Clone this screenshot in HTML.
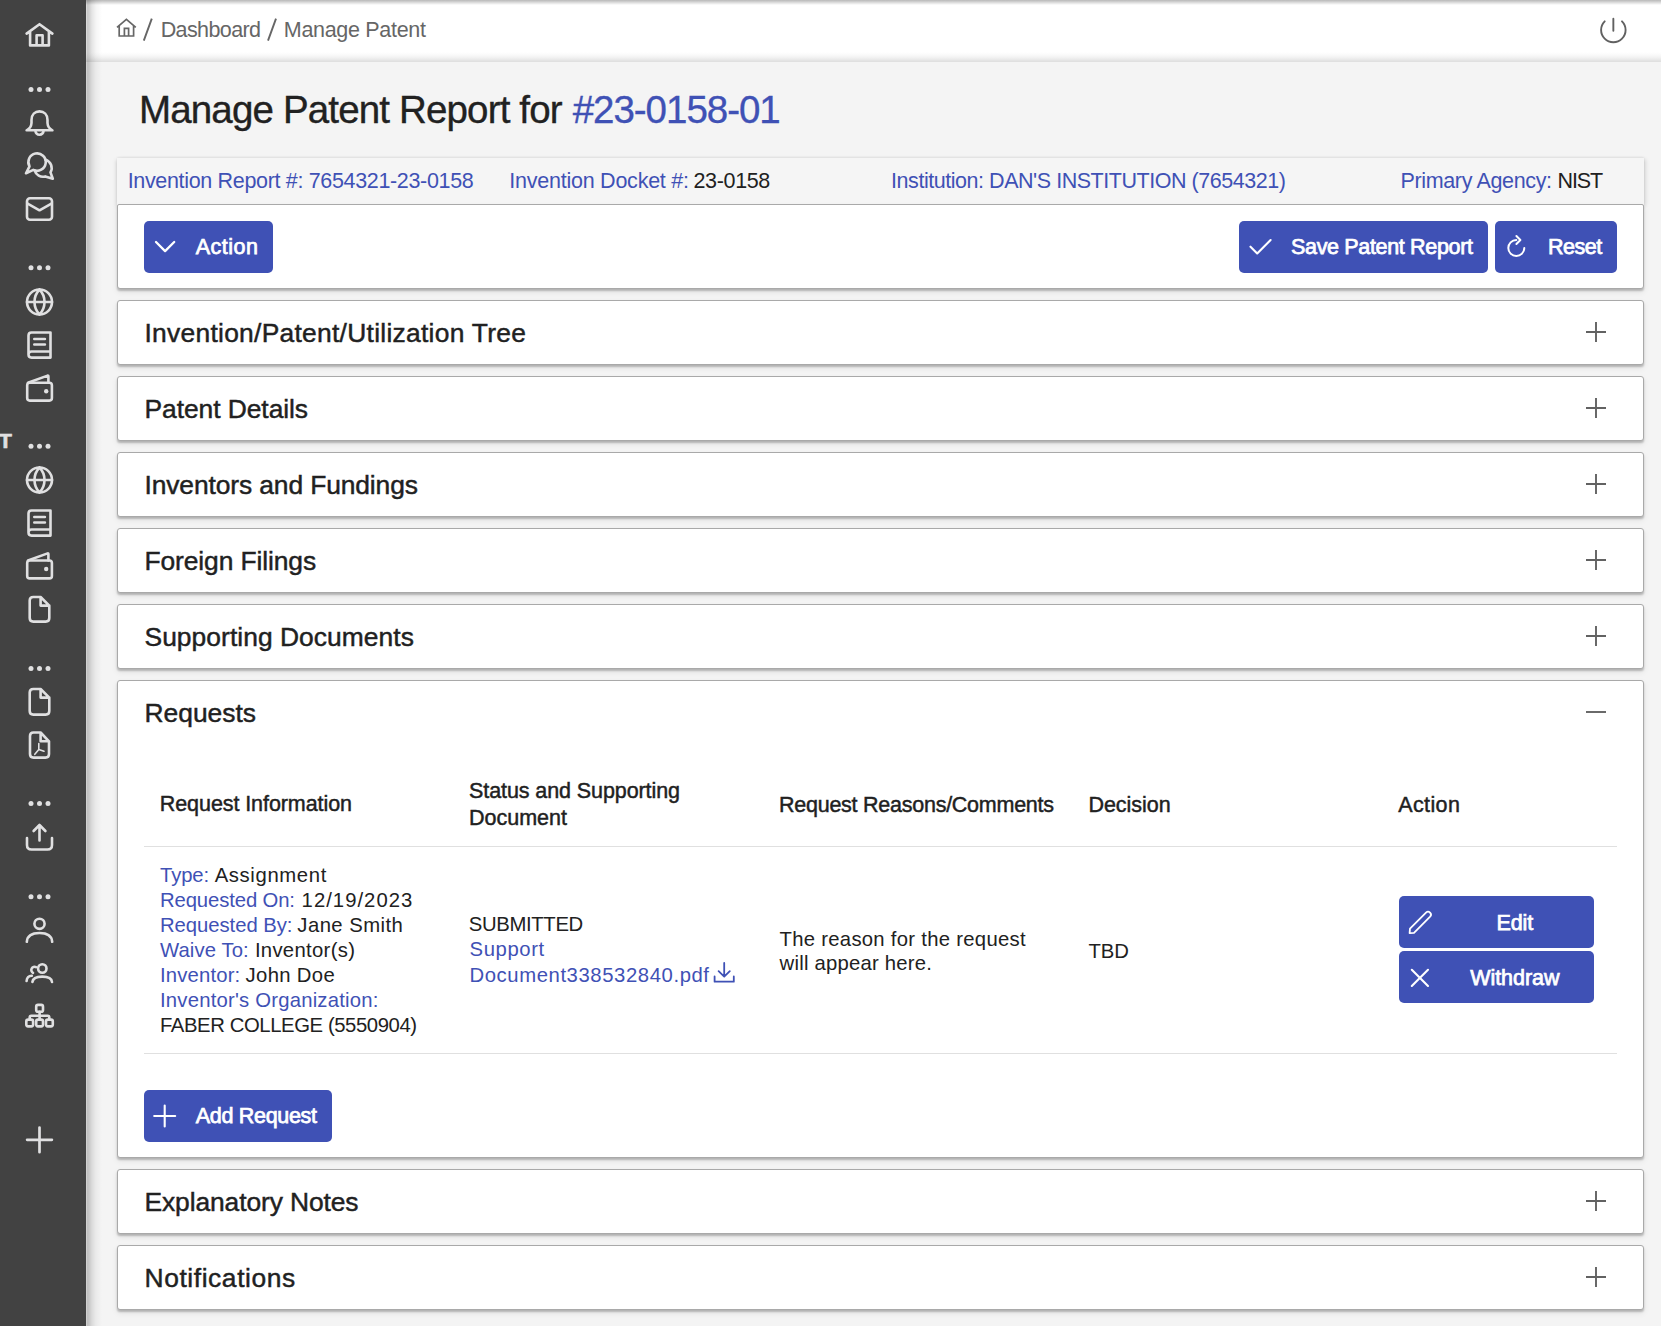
<!DOCTYPE html>
<html><head><meta charset="utf-8"><title>Manage Patent</title>
<style>
*{box-sizing:border-box;margin:0;padding:0}
html,body{width:1661px;height:1326px;overflow:hidden;background:#f4f4f4;font-family:"Liberation Sans",sans-serif;color:#212121}
.a{position:absolute}
.tx{position:absolute;white-space:nowrap;line-height:1}
#side{left:0;top:0;width:86px;height:1326px;background:#424242;z-index:5}
#sideshadow{left:86px;top:0;width:16px;height:1326px;background:linear-gradient(to right,rgba(0,0,0,.15) 0,rgba(0,0,0,.15) 1px,rgba(0,0,0,.21) 1.5px,rgba(0,0,0,.19) 3px,rgba(0,0,0,.1) 6px,rgba(0,0,0,.04) 10px,rgba(0,0,0,0) 16px);z-index:4}
#hdr{left:86px;top:0;width:1575px;height:62px;background:linear-gradient(to bottom,#fff 0,#fff 52px,#fafafa 55px,#f0f0f0 58px,#e4e4e4 60.5px,#e0e0e0 61.5px,#ececec 62px)}
#hdrtop{left:86px;top:0;width:1575px;height:5px;background:linear-gradient(to bottom,rgba(0,0,0,.28),rgba(0,0,0,0));z-index:3}
.card{position:absolute;background:#fff;border:1px solid #a9a9a9;border-radius:3px;box-shadow:0 2px 2px rgba(0,0,0,.22),0 3px 6px rgba(0,0,0,.08)}
.acc{left:117px;width:1527px;height:65px}
.btn{position:absolute;background:#3f51b5;border-radius:5px;z-index:1}
</style></head><body>
<div id="side" class="a"></div>
<div id="sideshadow" class="a"></div>
<svg class="a" style="left:0;top:0;z-index:6" width="86" height="1326" viewBox="0 0 86 1326" fill="none" stroke="#e0e0e1" stroke-width="2.6" stroke-linecap="round" stroke-linejoin="round">
<!-- home -->
<path d="M26.6 33.6L39.5 24.2L52.4 33.6M30.1 31.2V45.4H48.9V31.2M36.6 45.4V35.3H42.6V45.4"/>
<!-- dots -->
<g fill="#e0e0e1" stroke="none"><circle cx="31" cy="89.6" r="2.5"/><circle cx="39.5" cy="89.6" r="2.5"/><circle cx="48" cy="89.6" r="2.5"/>
<circle cx="31" cy="267.7" r="2.5"/><circle cx="39.5" cy="267.7" r="2.5"/><circle cx="48" cy="267.7" r="2.5"/>
<circle cx="31" cy="446.3" r="2.5"/><circle cx="39.5" cy="446.3" r="2.5"/><circle cx="48" cy="446.3" r="2.5"/>
<circle cx="31" cy="668.6" r="2.5"/><circle cx="39.5" cy="668.6" r="2.5"/><circle cx="48" cy="668.6" r="2.5"/>
<circle cx="31" cy="803.6" r="2.5"/><circle cx="39.5" cy="803.6" r="2.5"/><circle cx="48" cy="803.6" r="2.5"/>
<circle cx="31" cy="896.7" r="2.5"/><circle cx="39.5" cy="896.7" r="2.5"/><circle cx="48" cy="896.7" r="2.5"/>
<circle cx="46.2" cy="391.2" r="2.2"/><circle cx="46.2" cy="569" r="2.2"/></g>
<!-- bell -->
<path d="M26.6 130.3Q31.2 128 31.5 123V120C31.5 114.5 35 111.4 39.5 111.4C44 111.4 47.5 114.5 47.5 120V123Q47.8 128 52.4 130.3Z"/>
<path d="M35.4 130.6A4.1 4.1 0 0 0 43.6 130.6"/>
<!-- chat -->
<path d="M33.3 169.9A8.7 8.7 0 1 0 29.5 166.35L26 173.3Z"/>
<path d="M45.37 159.63A8.7 8.7 0 0 1 50.5 172.35L52.8 178.8L45.25 176.4A8.7 8.7 0 0 1 34.6 170.4"/>
<!-- mail -->
<rect x="27" y="198.2" width="25" height="21.6" rx="3"/>
<path d="M27.6 203.6L39.5 210.3L51.4 203.6"/>
<!-- globe 1 -->
<circle cx="39.5" cy="302" r="12.5"/><path d="M39.5 289.5A18.1 18.1 0 0 0 39.5 314.5A18.1 18.1 0 0 0 39.5 289.5"/><path d="M27 302H52"/>
<!-- book 1 -->
<path d="M28.5 335.5Q28.5 332.5 31.5 332.5H50.5V357.6H31.5Q28.5 357.6 28.5 354.6ZM28.5 354.6Q28.5 351.5 31.5 351.5H50.5M34.3 339H44.9M34.3 344.5H44.9"/>
<!-- wallet 1 -->
<rect x="27.2" y="382.7" width="24.7" height="17.9" rx="2.5"/>
<path d="M28 382.7L47.6 375.6Q48.4 375.4 48.4 376.4V382.7"/>
<!-- globe 2 -->
<circle cx="39.5" cy="480" r="12.5"/><path d="M39.5 467.5A18.1 18.1 0 0 0 39.5 492.5A18.1 18.1 0 0 0 39.5 467.5"/><path d="M27 480H52"/>
<!-- book 2 -->
<path d="M28.5 513.5Q28.5 510.5 31.5 510.5H50.5V535.6H31.5Q28.5 535.6 28.5 532.6ZM28.5 532.6Q28.5 529.5 31.5 529.5H50.5M34.3 517H44.9M34.3 522.5H44.9"/>
<!-- wallet 2 -->
<rect x="27.2" y="560.5" width="24.7" height="17.9" rx="2.5"/>
<path d="M28 560.5L47.6 553.4Q48.4 553.2 48.4 554.2V560.5"/>
<!-- file 1 -->
<path d="M40.6 597H33.3Q29.7 597 29.7 600.6V618Q29.7 621.6 33.3 621.6H45.7Q49.3 621.6 49.3 618V605.6ZM40.6 597V605.6H49.3"/>
<!-- file 2 -->
<path d="M40.6 689H33.3Q29.7 689 29.7 692.6V711Q29.7 714.6 33.3 714.6H45.7Q49.3 714.6 49.3 711V697.6ZM40.6 689V697.6H49.3"/>
<!-- pdf -->
<path d="M40.6 732.5H33.5Q30 732.5 30 736V754Q30 757.6 33.5 757.6H45.5Q49 757.6 49 754V741.3ZM40.6 732.5V741.3H49"/>
<path d="M38.8 743.5V749.5L34.8 754.3M38.8 749.5L44 751.3" stroke-width="1.6"/>
<!-- upload -->
<path d="M39.5 840.5V825M33.6 831L39.5 825L45.4 831M27 838V845Q27 849.5 31.5 849.5H47.5Q52 849.5 52 845V838"/>
<!-- person -->
<circle cx="39.5" cy="923.8" r="5.1"/>
<path d="M26.8 941.8Q27.5 933 39.5 933Q51.5 933 52.2 941.8"/>
<!-- people -->
<circle cx="42.3" cy="968.5" r="4.2"/>
<path d="M36 967.2A3.1 3.1 0 1 0 33 972.8"/>
<path d="M32.4 982Q33 976.6 42.2 976.6Q51.5 976.6 52 982M26.6 981Q27 976 31.8 975.8"/>
<!-- org -->
<rect x="36.2" y="1004.9" width="6.8" height="6.8" rx="1.8"/>
<rect x="26.3" y="1019.6" width="6.8" height="6.8" rx="1.8"/>
<rect x="36.2" y="1019.6" width="6.8" height="6.8" rx="1.8"/>
<rect x="46" y="1019.6" width="6.8" height="6.8" rx="1.8"/>
<path d="M39.6 1011.7V1019.6M29.7 1019.6V1017.4Q29.7 1015.8 31.3 1015.8H47.7Q49.3 1015.8 49.3 1017.4V1019.6"/>
<!-- plus -->
<path d="M39.5 1127.5V1152.2M27.1 1139.8H51.9" stroke-width="2.7"/>
</svg>
<div class="a" style="left:-1px;top:430px;font-size:21px;font-weight:bold;color:#e0e0e1;line-height:21px;z-index:6;-webkit-text-stroke:0.7px #e0e0e1">T</div>
<div id="hdr" class="a"></div>
<div id="hdrtop" class="a"></div>
<!-- info bar -->
<div class="a" style="left:117px;top:158px;width:1527px;height:47px;background:#f5f5f5;box-shadow:-1px 2px 4px rgba(0,0,0,.13),0 -1px 2px rgba(0,0,0,.05),2px 1px 4px rgba(0,0,0,.1)"></div>
<!-- action card -->
<div class="card" style="left:117px;top:204px;width:1527px;height:85px;border-top-left-radius:2px;border-top-right-radius:2px"></div>
<div class="btn" style="left:144px;top:221px;width:129px;height:52px"></div>
<div class="btn" style="left:1239px;top:221px;width:249px;height:52px"></div>
<div class="btn" style="left:1495px;top:221px;width:122px;height:52px"></div>
<!-- accordions -->
<div class="card acc" style="top:300px"></div>
<div class="card acc" style="top:376px"></div>
<div class="card acc" style="top:452px"></div>
<div class="card acc" style="top:528px"></div>
<div class="card acc" style="top:604px"></div>
<div class="card acc" style="top:680px;height:478px"></div>
<div class="card acc" style="top:1169px"></div>
<div class="card acc" style="top:1245px"></div>
<!-- table dividers -->
<div class="a" style="left:144px;top:846px;width:1473px;height:1px;background:#e0e0e0;z-index:1"></div>
<div class="a" style="left:144px;top:1053px;width:1473px;height:1px;background:#e0e0e0;z-index:1"></div>
<!-- request buttons -->
<div class="btn" style="left:1399px;top:896px;width:195px;height:52px"></div>
<div class="btn" style="left:1399px;top:951px;width:195px;height:52px"></div>
<div class="btn" style="left:144px;top:1090px;width:188px;height:52px"></div>

<svg class="a" style="left:0;top:0;z-index:3" width="1661" height="1326" viewBox="0 0 1661 1326" fill="none" stroke-linecap="round" stroke-linejoin="round">
<!-- breadcrumb home -->
<path d="M117 27.4L126.4 19.4L135.8 27.4M119.2 25.6V36H133.6V25.6M124.4 36V28.4H128.6V36" stroke="#666" stroke-width="1.7" stroke-linejoin="miter" stroke-linecap="butt"/>
<path d="M143.8 40.6L151.8 18.6M268 40.6L276 18.6" stroke="#666" stroke-width="1.9" stroke-linecap="butt"/>
<!-- power -->
<path d="M1604.7 21.3A12.25 12.25 0 1 0 1622 21.3M1613.35 18.8V30.8" stroke="#616161" stroke-width="1.9"/>
<!-- action chevron -->
<path d="M156 242L165.1 251.1L174.2 242" stroke="#fff" stroke-width="2.3"/>
<!-- check -->
<path d="M1250.5 246.7L1257.2 253.4L1270.6 240" stroke="#fff" stroke-width="2.1"/>
<!-- reset -->
<path d="M1524.3 248A8 8 0 1 1 1516.3 240" stroke="#fff" stroke-width="2"/>
<path d="M1516.4 236L1520.4 240L1516.4 244" stroke="#fff" stroke-width="2"/>
<!-- plus icons -->
<g stroke="#626262" stroke-width="1.9" stroke-linecap="butt">
<path d="M1596 322V342M1586 332H1606"/>
<path d="M1596 398V418M1586 408H1606"/>
<path d="M1596 474V494M1586 484H1606"/>
<path d="M1596 550V570M1586 560H1606"/>
<path d="M1596 626V646M1586 636H1606"/>
<path d="M1586 712H1606"/>
<path d="M1596 1191V1211M1586 1201H1606"/>
<path d="M1596 1267V1287M1586 1277H1606"/>
</g>
<!-- download -->
<path d="M724.2 963V976.5M718.6 971.2L724.2 976.7L729.8 971.2M714.6 976.5V981.7H733.8V976.5" stroke="#3f51b5" stroke-width="1.8"/>
<!-- pencil -->
<path d="M1426 912.6A2.9 2.9 0 0 1 1430.1 916.7L1414 932.8L1409.6 933.2L1410 928.6Z" stroke="#fff" stroke-width="1.8"/>
<!-- x -->
<path d="M1411.8 969.8L1428 986M1428 969.8L1411.8 986" stroke="#fff" stroke-width="2.1"/>
<!-- add plus -->
<path d="M164.7 1105.5V1126.5M154.2 1116H175.2" stroke="#fff" stroke-width="2.1"/>
</svg>

<div class="tx" id="t0" style="left:160.70px;top:19.81px;font-size:21.5px;letter-spacing:-0.604px"><span style="color:#666666">Dashboard</span></div>
<div class="tx" id="t1" style="left:283.80px;top:19.81px;font-size:21.5px;letter-spacing:-0.306px"><span style="color:#666666">Manage Patent</span></div>
<div class="tx" id="t2" style="left:139.00px;top:91.00px;font-size:38.5px;letter-spacing:-0.845px;-webkit-text-stroke:0.35px currentColor"><span style="color:#212121">Manage Patent Report for</span></div>
<div class="tx" id="t3" style="left:572.70px;top:91.00px;font-size:38.5px;letter-spacing:-1.030px;-webkit-text-stroke:0.35px currentColor"><span style="color:#3f51b5">#23-0158-01</span></div>
<div class="tx" id="t4" style="left:127.70px;top:171.00px;font-size:21.5px;letter-spacing:-0.333px"><span style="color:#3f51b5">Invention Report #: 7654321-23-0158</span></div>
<div class="tx" id="t5" style="left:509.30px;top:171.00px;font-size:21.5px;letter-spacing:-0.241px"><span style="color:#3f51b5">Invention Docket #:</span></div>
<div class="tx" id="t6" style="left:693.50px;top:171.00px;font-size:21.5px;letter-spacing:-0.351px"><span style="color:#212121">23-0158</span></div>
<div class="tx" id="t7" style="left:891.10px;top:171.00px;font-size:21.5px;letter-spacing:-0.459px"><span style="color:#3f51b5">Institution: DAN'S INSTITUTION (7654321)</span></div>
<div class="tx" id="t8" style="left:1400.50px;top:171.00px;font-size:21.5px;letter-spacing:-0.359px"><span style="color:#3f51b5">Primary Agency:</span></div>
<div class="tx" id="t9" style="left:1557.60px;top:171.00px;font-size:21.5px;letter-spacing:-1.173px"><span style="color:#212121">NIST</span></div>
<div class="tx" id="t10" style="left:195.80px;top:236.91px;font-size:21.5px;letter-spacing:0.486px;-webkit-text-stroke:0.75px currentColor;z-index:2"><span style="color:#fff">Action</span></div>
<div class="tx" id="t11" style="left:1291.00px;top:236.91px;font-size:21.5px;letter-spacing:-0.335px;-webkit-text-stroke:0.75px currentColor;z-index:2"><span style="color:#fff">Save Patent Report</span></div>
<div class="tx" id="t12" style="left:1548.00px;top:236.91px;font-size:21.5px;letter-spacing:-0.479px;-webkit-text-stroke:0.75px currentColor;z-index:2"><span style="color:#fff">Reset</span></div>
<div class="tx" id="t13" style="left:144.50px;top:320.01px;font-size:26.4px;letter-spacing:0.273px;-webkit-text-stroke:0.45px currentColor;z-index:2"><span style="color:#212121">Invention/Patent/Utilization Tree</span></div>
<div class="tx" id="t14" style="left:144.50px;top:396.01px;font-size:26.4px;letter-spacing:-0.057px;-webkit-text-stroke:0.45px currentColor;z-index:2"><span style="color:#212121">Patent Details</span></div>
<div class="tx" id="t15" style="left:144.50px;top:472.01px;font-size:26.4px;letter-spacing:-0.113px;-webkit-text-stroke:0.45px currentColor;z-index:2"><span style="color:#212121">Inventors and Fundings</span></div>
<div class="tx" id="t16" style="left:144.50px;top:548.01px;font-size:26.4px;letter-spacing:-0.106px;-webkit-text-stroke:0.45px currentColor;z-index:2"><span style="color:#212121">Foreign Filings</span></div>
<div class="tx" id="t17" style="left:144.50px;top:624.01px;font-size:26.4px;letter-spacing:0.046px;-webkit-text-stroke:0.45px currentColor;z-index:2"><span style="color:#212121">Supporting Documents</span></div>
<div class="tx" id="t18" style="left:144.50px;top:700.01px;font-size:26.4px;letter-spacing:0.000px;-webkit-text-stroke:0.45px currentColor;z-index:2"><span style="color:#212121">Requests</span></div>
<div class="tx" id="t19" style="left:144.50px;top:1189.01px;font-size:26.4px;letter-spacing:-0.099px;-webkit-text-stroke:0.45px currentColor;z-index:2"><span style="color:#212121">Explanatory Notes</span></div>
<div class="tx" id="t20" style="left:144.50px;top:1265.01px;font-size:26.4px;letter-spacing:0.579px;-webkit-text-stroke:0.45px currentColor;z-index:2"><span style="color:#212121">Notifications</span></div>
<div class="tx" id="t21" style="left:159.80px;top:793.91px;font-size:21.5px;letter-spacing:-0.078px;-webkit-text-stroke:0.45px currentColor;z-index:2"><span style="color:#212121">Request Information</span></div>
<div class="tx" id="t22" style="left:469.00px;top:781.41px;font-size:21.5px;letter-spacing:-0.087px;-webkit-text-stroke:0.45px currentColor;z-index:2"><span style="color:#212121">Status and Supporting</span></div>
<div class="tx" id="t23" style="left:469.00px;top:808.41px;font-size:21.5px;letter-spacing:-0.006px;-webkit-text-stroke:0.45px currentColor;z-index:2"><span style="color:#212121">Document</span></div>
<div class="tx" id="t24" style="left:779.00px;top:794.91px;font-size:21.5px;letter-spacing:-0.252px;-webkit-text-stroke:0.45px currentColor;z-index:2"><span style="color:#212121">Request Reasons/Comments</span></div>
<div class="tx" id="t25" style="left:1088.40px;top:794.91px;font-size:21.5px;letter-spacing:-0.022px;-webkit-text-stroke:0.45px currentColor;z-index:2"><span style="color:#212121">Decision</span></div>
<div class="tx" id="t26" style="left:1398.20px;top:794.91px;font-size:21.5px;letter-spacing:0.386px;-webkit-text-stroke:0.45px currentColor;z-index:2"><span style="color:#212121">Action</span></div>
<div class="tx" id="t27" style="left:160.00px;top:865.00px;font-size:20.3px;letter-spacing:-0.108px;z-index:2"><span style="color:#3f51b5">Type:</span></div>
<div class="tx" id="t28" style="left:214.70px;top:865.00px;font-size:20.3px;letter-spacing:0.626px;z-index:2"><span style="color:#212121">Assignment</span></div>
<div class="tx" id="t29" style="left:160.00px;top:890.00px;font-size:20.3px;letter-spacing:-0.118px;z-index:2"><span style="color:#3f51b5">Requested On:</span></div>
<div class="tx" id="t30" style="left:301.60px;top:890.00px;font-size:20.3px;letter-spacing:1.022px;z-index:2"><span style="color:#212121">12/19/2023</span></div>
<div class="tx" id="t31" style="left:160.00px;top:915.00px;font-size:20.3px;letter-spacing:-0.047px;z-index:2"><span style="color:#3f51b5">Requested By:</span></div>
<div class="tx" id="t32" style="left:297.30px;top:915.00px;font-size:20.3px;letter-spacing:0.455px;z-index:2"><span style="color:#212121">Jane Smith</span></div>
<div class="tx" id="t33" style="left:160.00px;top:940.00px;font-size:20.3px;letter-spacing:0.100px;z-index:2"><span style="color:#3f51b5">Waive To:</span></div>
<div class="tx" id="t34" style="left:254.90px;top:940.00px;font-size:20.3px;letter-spacing:0.307px;z-index:2"><span style="color:#212121">Inventor(s)</span></div>
<div class="tx" id="t35" style="left:160.00px;top:965.00px;font-size:20.3px;letter-spacing:0.167px;z-index:2"><span style="color:#3f51b5">Inventor:</span></div>
<div class="tx" id="t36" style="left:245.60px;top:965.00px;font-size:20.3px;letter-spacing:0.331px;z-index:2"><span style="color:#212121">John Doe</span></div>
<div class="tx" id="t37" style="left:160.00px;top:990.00px;font-size:20.3px;letter-spacing:0.210px;z-index:2"><span style="color:#3f51b5">Inventor's Organization:</span></div>
<div class="tx" id="t38" style="left:160.00px;top:1015.00px;font-size:20.3px;letter-spacing:-0.406px;z-index:2"><span style="color:#212121">FABER COLLEGE (5550904)</span></div>
<div class="tx" id="t39" style="left:468.80px;top:914.31px;font-size:20.3px;letter-spacing:-0.342px;z-index:2"><span style="color:#212121">SUBMITTED</span></div>
<div class="tx" id="t40" style="left:469.50px;top:939.31px;font-size:20.3px;letter-spacing:0.608px;z-index:2"><span style="color:#3f51b5">Support</span></div>
<div class="tx" id="t41" style="left:469.50px;top:965.00px;font-size:20.3px;letter-spacing:0.586px;z-index:2"><span style="color:#3f51b5">Document338532840.pdf</span></div>
<div class="tx" id="t42" style="left:779.50px;top:928.91px;font-size:20.3px;letter-spacing:0.283px;z-index:2"><span style="color:#212121">The reason for the request</span></div>
<div class="tx" id="t43" style="left:779.60px;top:953.31px;font-size:20.3px;letter-spacing:0.212px;z-index:2"><span style="color:#212121">will appear here.</span></div>
<div class="tx" id="t44" style="left:1088.60px;top:940.81px;font-size:20.3px;letter-spacing:-0.150px;z-index:2"><span style="color:#212121">TBD</span></div>
<div class="tx" id="t45" style="left:1496.60px;top:913.00px;font-size:21.5px;letter-spacing:-0.162px;-webkit-text-stroke:0.75px currentColor;z-index:3"><span style="color:#fff">Edit</span></div>
<div class="tx" id="t46" style="left:1470.20px;top:968.21px;font-size:21.5px;letter-spacing:-0.036px;-webkit-text-stroke:0.75px currentColor;z-index:3"><span style="color:#fff">Withdraw</span></div>
<div class="tx" id="t47" style="left:195.80px;top:1106.10px;font-size:21.5px;letter-spacing:-0.307px;-webkit-text-stroke:0.75px currentColor;z-index:3"><span style="color:#fff">Add Request</span></div>
</body></html>
